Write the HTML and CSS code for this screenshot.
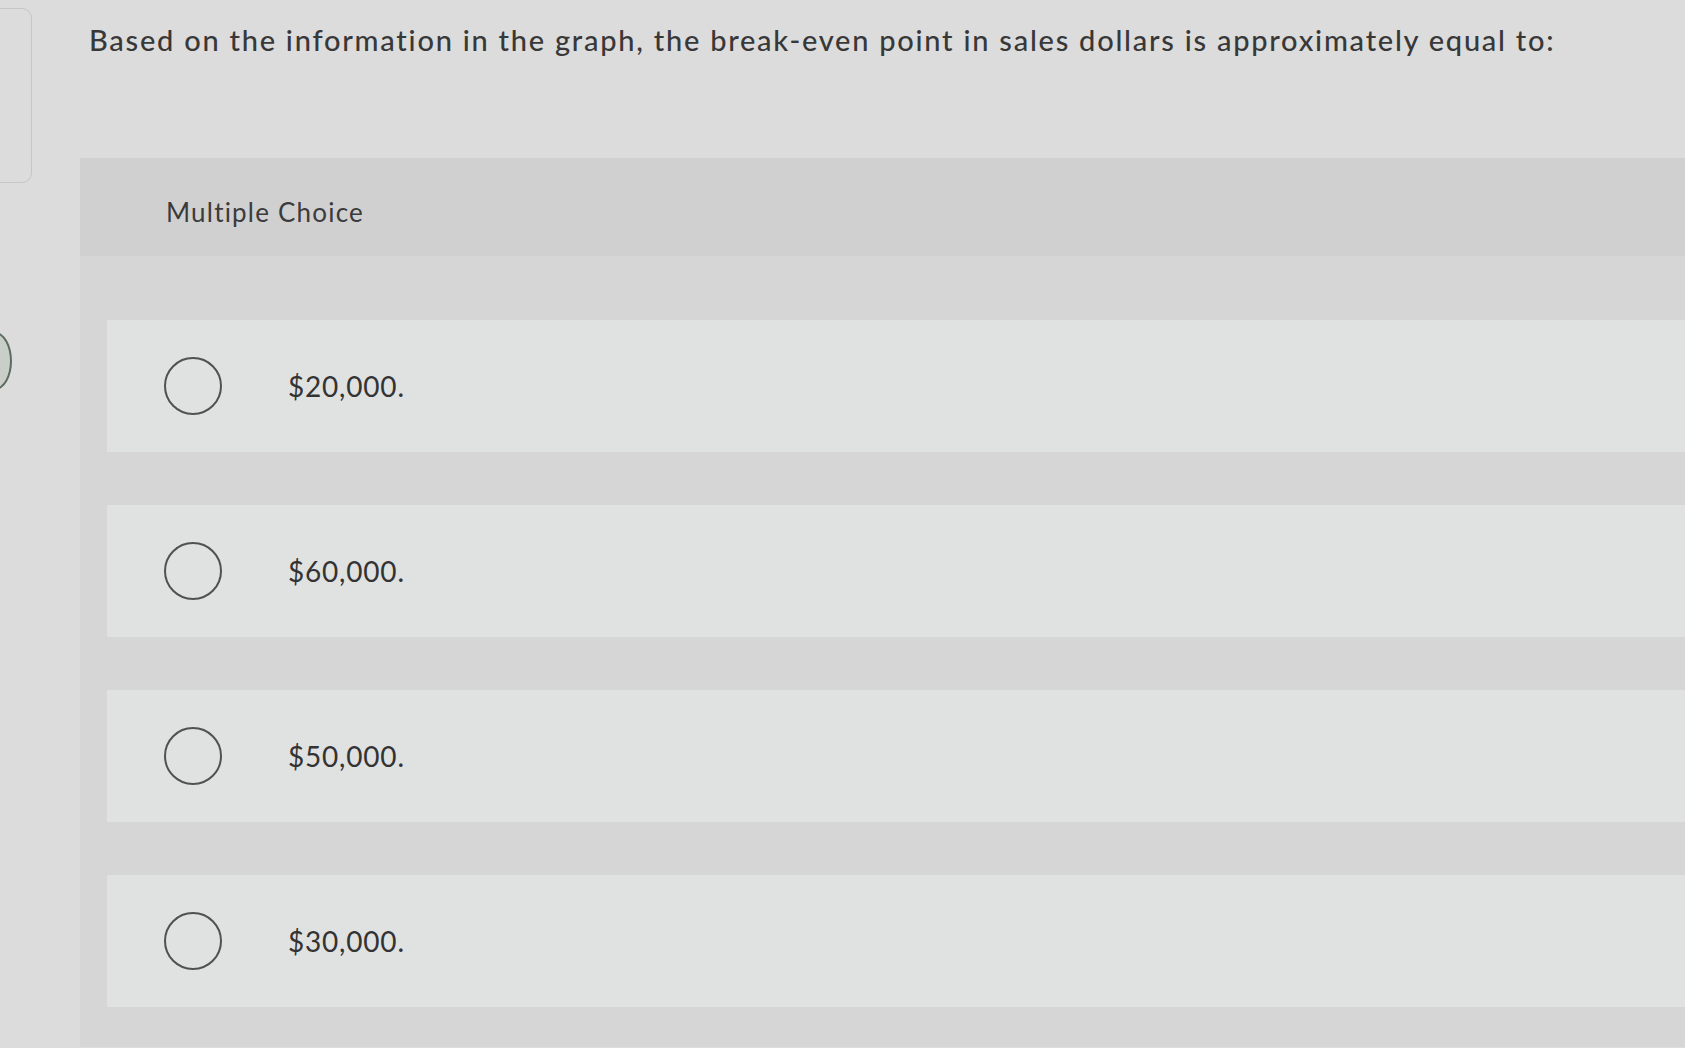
FILE: index.html
```html
<!DOCTYPE html>
<html lang="en">
<head>
<meta charset="utf-8">
<title>Multiple Choice</title>
<link rel="stylesheet" href="styles.css">
</head>
<body>
<div class="edge-tab" aria-hidden="true"></div>
<div class="edge-knob" aria-hidden="true"></div>
<main class="page">
  <p class="question">Based on the information in the graph, the break-even point in sales dollars is approximately equal to:</p>
  <section class="mc">
    <div class="mc-head">Multiple Choice</div>
    <ul class="options">
      <li class="option"><span class="radio"></span><span class="label">$20,000.</span></li>
      <li class="option"><span class="radio"></span><span class="label">$60,000.</span></li>
      <li class="option"><span class="radio"></span><span class="label">$50,000.</span></li>
      <li class="option"><span class="radio"></span><span class="label">$30,000.</span></li>
    </ul>
  </section>
</main>
</body>
</html>
```
FILE: styles.css
```css
html, body {
  margin: 0;
  padding: 0;
}
body {
  background: #dcdcdd;
  font-family: "Lato", "Open Sans", "Liberation Sans", sans-serif;
  color: #3b3b3b;
  overflow: hidden;
  height: 1048px;
}
.edge-tab {
  position: absolute;
  left: -14px;
  top: 8px;
  width: 46px;
  height: 175px;
  border: 1px solid #c6c6c6;
  border-radius: 10px;
  box-sizing: border-box;
}
.edge-knob {
  position: absolute;
  left: -22px;
  top: 332px;
  width: 34px;
  height: 58px;
  border: 2px solid #5b6b5e;
  border-radius: 50%;
  background: #c9cec9;
  box-sizing: border-box;
}
.page {
  padding-top: 22px;
}
.question {
  margin: 0 0 0 89px;
  font-size: 29px;
  line-height: 36px;
  font-weight: 500;
  letter-spacing: 1.75px;
  white-space: nowrap;
  color: #383838;
}
.mc {
  margin: 100px 0 0 80px;
  background: #d6d6d6;
}
.mc-head {
  height: 98px;
  box-sizing: border-box;
  padding: 38px 0 0 86px;
  background: #d0d0d1;
  font-size: 26px;
  line-height: 32px;
  letter-spacing: 1.2px;
}
.options {
  list-style: none;
  margin: 0;
  padding: 64px 0 40px 27px;
  display: flex;
  flex-direction: column;
  gap: 53px;
}
.option {
  height: 132px;
  background: #e0e1e1;
  display: flex;
  align-items: center;
  padding-left: 57px;
}
.radio {
  width: 58px;
  height: 58px;
  border: 2px solid #4f5252;
  border-radius: 50%;
  box-sizing: border-box;
  flex: none;
}
.label {
  margin-left: 66px;
  font-size: 28px;
  letter-spacing: 0.8px;
  color: #333;
}
```
